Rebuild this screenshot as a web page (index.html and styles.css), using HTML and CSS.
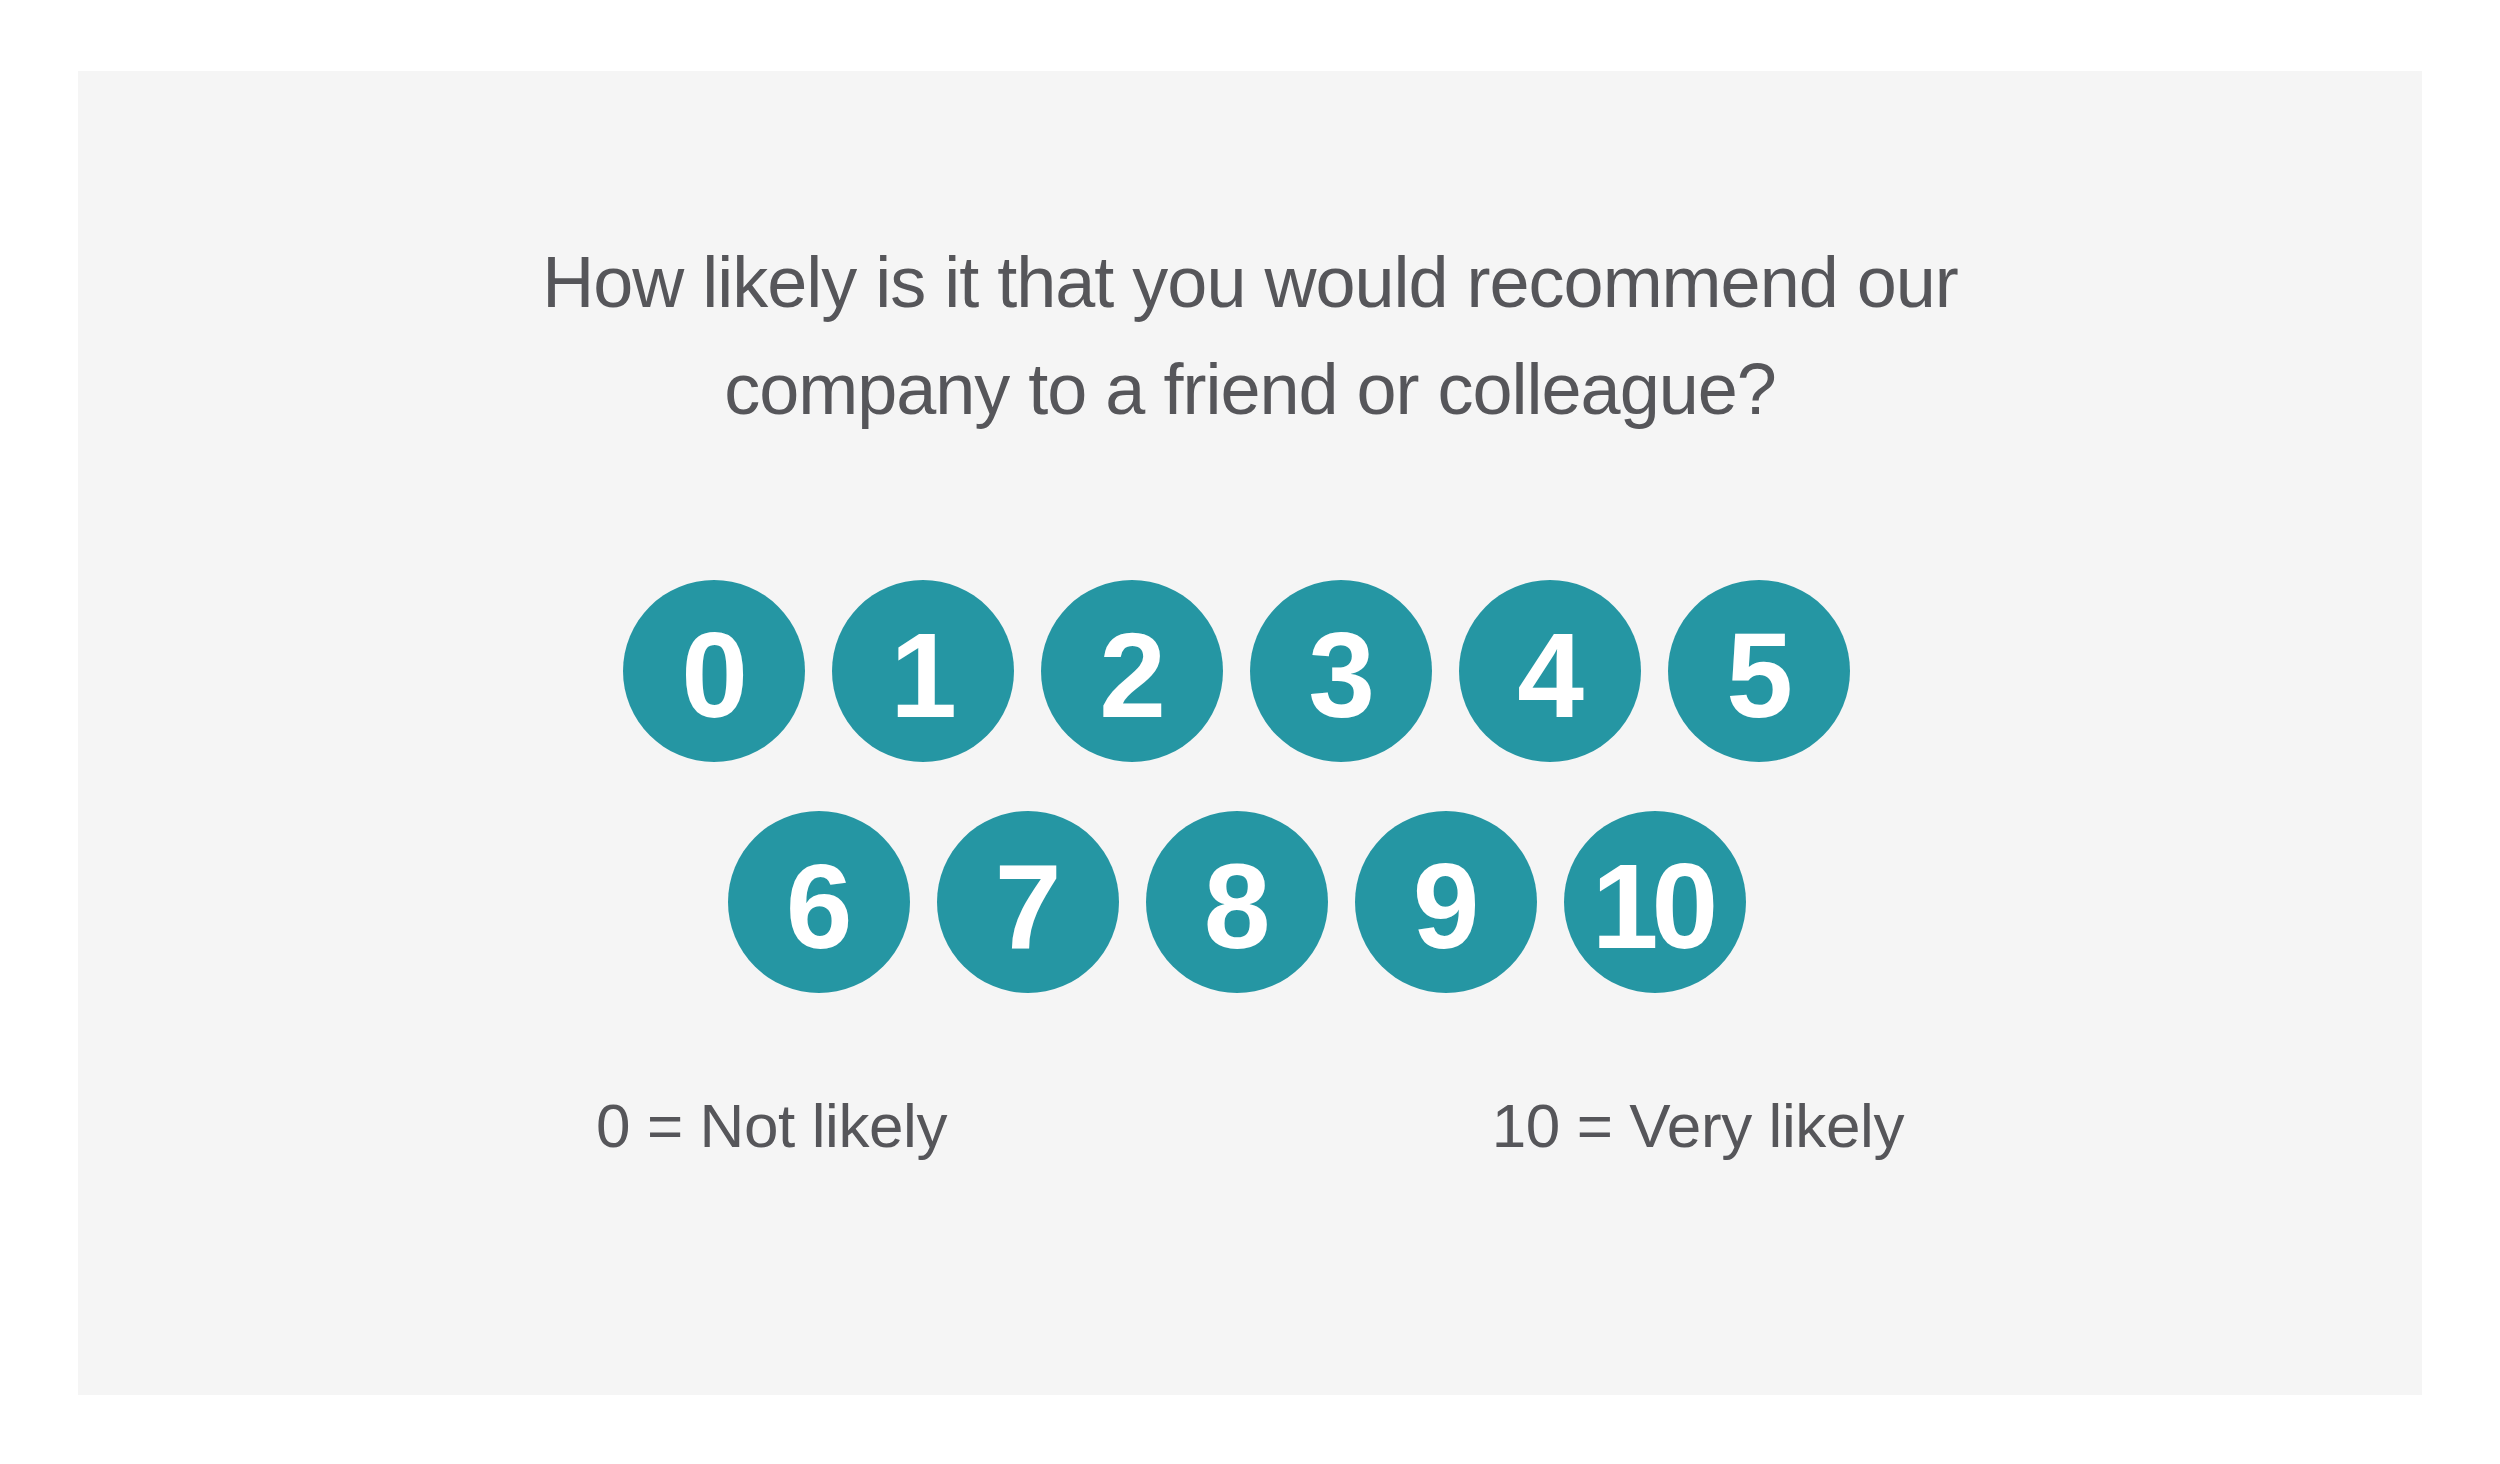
FILE: index.html
```html
<!DOCTYPE html>
<html lang="en">
<head>
<meta charset="utf-8">
<title>Net Promoter Score survey</title>
<link rel="stylesheet" href="styles.css">
</head>
<body>
<div class="page">
  <section class="panel">
    <p class="question">How likely is it that you would recommend our<br>company to a friend or colleague?</p>
    <div class="scale">
      <button class="score">0</button>
      <button class="score">1</button>
      <button class="score">2</button>
      <button class="score">3</button>
      <button class="score">4</button>
      <button class="score">5</button>
      <button class="score">6</button>
      <button class="score">7</button>
      <button class="score">8</button>
      <button class="score">9</button>
      <button class="score score-wide">10</button>
    </div>
    <div class="legend">
      <span class="legend-item">0 = Not likely</span>
      <span class="legend-item">10 = Very likely</span>
    </div>
  </section>
</div>
</body>
</html>
```

FILE: styles.css
```css
html, body {
  margin: 0;
  padding: 0;
  background: #ffffff;
}

.page {
  padding: 71px 78px 69px 78px;
}

.panel {
  box-sizing: border-box;
  height: 1324px;
  background: #f5f5f5;
  padding-top: 158px;
  font-family: "Liberation Sans", Arial, Helvetica, sans-serif;
  color: #56565a;
}

.question {
  margin: 0;
  text-align: center;
  font-size: 72px;
  line-height: 107px;
  letter-spacing: -1px;
}

.scale {
  width: 1300px;
  margin: 137px auto 0 auto;
  display: flex;
  flex-wrap: wrap;
  justify-content: center;
}

.score {
  box-sizing: border-box;
  width: 182px;
  height: 182px;
  margin: 0 27px 49px 0;
  padding: 8px 0 0 0;
  border: none;
  border-radius: 50%;
  background: #2596a3;
  color: #ffffff;
  font-family: "Liberation Sans", Arial, Helvetica, sans-serif;
  font-weight: bold;
  font-size: 120px;
  line-height: 174px;
  text-align: center;
  letter-spacing: -1px;
}

.score-wide {
  letter-spacing: -7px;
  text-indent: -6px;
}

.legend {
  width: 1308px;
  margin: 37px auto 0 auto;
  display: flex;
  justify-content: space-between;
  font-size: 62px;
  line-height: 93px;
  letter-spacing: -0.4px;
}
```
